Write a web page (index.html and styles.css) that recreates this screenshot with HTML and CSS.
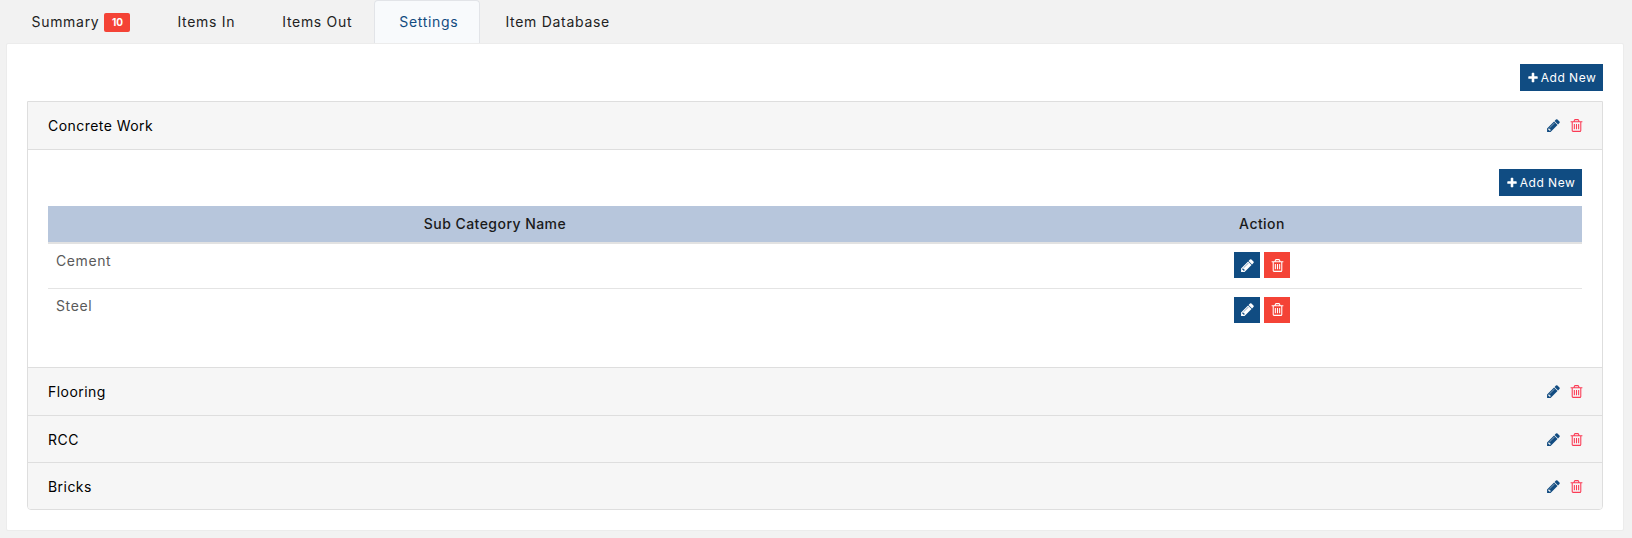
FILE: index.html
```html
<!DOCTYPE html>
<html lang="en">
<head>
<meta charset="utf-8">
<title>Settings</title>
<link rel="stylesheet" href="styles.css">
</head>
<body>
<svg class="defs" width="0" height="0" aria-hidden="true">
  <symbol id="i-plus" viewBox="0 0 1792 1792"><path fill="currentColor" d="M1600 736v192q0 40-28 68t-68 28h-416v416q0 40-28 68t-68 28h-192q-40 0-68-28t-28-68v-416h-416q-40 0-68-28t-28-68v-192q0-40 28-68t68-28h416v-416q0-40 28-68t68-28h192q40 0 68 28t28 68v416h416q40 0 68 28t28 68z"/></symbol>
  <symbol id="i-pencil" viewBox="0 0 1792 1792"><path fill="currentColor" d="M491 1536l91-91-235-235-91 91v107h128v128h107zm523-928q0-22-22-22-10 0-17 7l-542 542q-7 7-7 17 0 22 22 22 10 0 17-7l542-542q7-7 7-17zm-54-192l416 416-832 832h-416v-416zm683 96q0 53-37 90l-166 166-416-416 166-165q36-38 90-38 53 0 91 38l235 234q37 39 37 91z"/></symbol>
  <symbol id="i-trash" viewBox="0 0 1792 1792"><path fill="currentColor" d="M704 736v576q0 14-9 23t-23 9h-64q-14 0-23-9t-9-23v-576q0-14 9-23t23-9h64q14 0 23 9t9 23zm256 0v576q0 14-9 23t-23 9h-64q-14 0-23-9t-9-23v-576q0-14 9-23t23-9h64q14 0 23 9t9 23zm256 0v576q0 14-9 23t-23 9h-64q-14 0-23-9t-9-23v-576q0-14 9-23t23-9h64q14 0 23 9t9 23zm128 724v-948h-896v948q0 22 7 40.500t14.500 27 10.500 8.500h832q3 0 10.500-8.500t14.500-27 7-40.500zm-672-1076h448l-48-117q-7-9-17-11h-317q-10 2-17 11zm928 32v64q0 14-9 23t-23 9h-96v948q0 83-47 143.500t-113 60.500h-832q-66 0-113-58.500t-47-141.500v-952h-96q-14 0-23-9t-9-23v-64q0-14 9-23t23-9h309l70-167q15-37 54-63t79-26h320q40 0 79 26t54 63l70 167h309q14 0 23 9t9 23z"/></symbol>
</svg>

<nav class="tabs">
  <a class="tab tab-first">Summary <span class="badge">10</span></a>
  <a class="tab">Items In</a>
  <a class="tab">Items Out</a>
  <a class="tab tab-active">Settings</a>
  <a class="tab">Item Database</a>
</nav>

<main class="card">
  <div class="toolbar">
    <button class="add-btn"><svg class="plus"><use href="#i-plus"/></svg>Add New</button>
  </div>
  <section class="accordion">
    <header class="acc-head acc-first">
      <span class="acc-title">Concrete Work</span>
      <span class="acc-icons">
        <svg class="ico ico-edit"><use href="#i-pencil"/></svg>
        <svg class="ico ico-del"><use href="#i-trash"/></svg>
      </span>
    </header>
    <div class="acc-body">
      <div class="toolbar">
        <button class="add-btn"><svg class="plus"><use href="#i-plus"/></svg>Add New</button>
      </div>
      <table class="sub-table">
        <thead>
          <tr><th class="col-name">Sub Category Name</th><th class="col-action">Action</th></tr>
        </thead>
        <tbody>
          <tr>
            <td>Cement</td>
            <td class="cell-action">
              <span class="act-group">
                <button class="act act-edit"><svg class="act-ico"><use href="#i-pencil"/></svg></button>
                <button class="act act-del"><svg class="act-ico"><use href="#i-trash"/></svg></button>
              </span>
            </td>
          </tr>
          <tr>
            <td>Steel</td>
            <td class="cell-action">
              <span class="act-group">
                <button class="act act-edit"><svg class="act-ico"><use href="#i-pencil"/></svg></button>
                <button class="act act-del"><svg class="act-ico"><use href="#i-trash"/></svg></button>
              </span>
            </td>
          </tr>
        </tbody>
      </table>
    </div>
    <header class="acc-head acc-flooring">
      <span class="acc-title">Flooring</span>
      <span class="acc-icons">
        <svg class="ico ico-edit"><use href="#i-pencil"/></svg>
        <svg class="ico ico-del"><use href="#i-trash"/></svg>
      </span>
    </header>
    <header class="acc-head">
      <span class="acc-title">RCC</span>
      <span class="acc-icons">
        <svg class="ico ico-edit"><use href="#i-pencil"/></svg>
        <svg class="ico ico-del"><use href="#i-trash"/></svg>
      </span>
    </header>
    <header class="acc-head acc-last">
      <span class="acc-title">Bricks</span>
      <span class="acc-icons">
        <svg class="ico ico-edit"><use href="#i-pencil"/></svg>
        <svg class="ico ico-del"><use href="#i-trash"/></svg>
      </span>
    </header>
  </section>
</main>
</body>
</html>
```

FILE: styles.css
```css
* { box-sizing: border-box; }

html, body { height: 100%; }

body {
  margin: 0;
  padding: 0 8px 0 6px;
  background: #f2f2f2;
  font-family: Inter, "Noto Sans", sans-serif;
  font-size: 14px;
  letter-spacing: 0.45px;
  color: #111;
  overflow: hidden;
}

.defs { position: absolute; }

.tabs {
  display: flex;
  height: 43px;
}

.tab {
  display: flex;
  align-items: center;
  gap: 5px;
  height: 43px;
  padding: 0 21px 2px 24px;
  border: 1px solid transparent;
  border-bottom: 0;
  border-radius: 4px 4px 0 0;
  color: #222;
  letter-spacing: 0.7px;
}

.tab-first { padding-left: 24.5px; }

.tab-active {
  background: #f8fafc;
  border-color: #e2e4e8;
  color: #124c81;
}

.badge {
  display: inline-block;
  width: 26px;
  height: 19px;
  margin-top: 2px;
  line-height: 19px;
  text-align: center;
  background: #f44336;
  color: #fff;
  font-size: 10px;
  font-weight: 700;
  border-radius: 2px;
  letter-spacing: 0;
}

.card {
  background: #fff;
  border: 1px solid #ececec;
  border-radius: 2px;
  height: 488px;
  padding: 20px;
}

.toolbar {
  display: flex;
  justify-content: flex-end;
  height: 27px;
  margin-bottom: 10px;
}

.add-btn {
  display: inline-flex;
  align-items: center;
  justify-content: center;
  width: 83px;
  height: 27px;
  padding: 0;
  border: 0;
  background: #104c82;
  color: #fff;
  font: inherit;
  font-size: 12px;
  letter-spacing: 0.5px;
}

.plus { width: 12px; height: 12px; margin-right: 2px; }

.accordion {
  border: 1px solid #dedede;
  border-radius: 0 0 4px 4px;
  overflow: hidden;
}

.acc-head {
  display: flex;
  align-items: center;
  justify-content: space-between;
  height: 47px;
  padding: 0 18px 0 20px;
  background: #f6f6f6;
  border-top: 1px solid #dedede;
}

.acc-first { border-top: 0; }
.acc-flooring { height: 48px; }

.acc-title { color: #000; }

.acc-icons { display: flex; align-items: center; gap: 8px; }

.ico { width: 15px; height: 15px; }
.ico-edit { color: #124c81; }
.ico-del { color: #fb3b55; }

.acc-body {
  height: 218px;
  padding: 19px 20px 0;
  border-top: 1px solid #dedede;
  background: #fff;
}

.sub-table {
  width: 100%;
  border-collapse: collapse;
  table-layout: fixed;
}

.col-name { width: 894px; }

.sub-table th {
  height: 37px;
  padding: 0 8px 2px;
  background: #b7c6dc;
  border-bottom: 2px solid #e2e2e2;
  font-weight: 500;
  color: #1a1a1a;
  text-align: center;
}

.sub-table td {
  height: 45px;
  padding: 8px;
  vertical-align: top;
  color: #5a5a5a;
  letter-spacing: 0.6px;
  line-height: 17px;
  border-bottom: 1px solid #e4e4e4;
}

.sub-table tbody tr:last-child td { border-bottom: 0; }

.cell-action { text-align: center; }

.act-group { display: inline-flex; gap: 4px; }

.act {
  display: flex;
  align-items: center;
  justify-content: center;
  width: 26px;
  height: 26px;
  padding: 0;
  border: 0;
  color: #fff;
}

.act-edit { background: #104c82; }
.act-del { background: #f44336; }
.act-ico { width: 15px; height: 15px; }
```
